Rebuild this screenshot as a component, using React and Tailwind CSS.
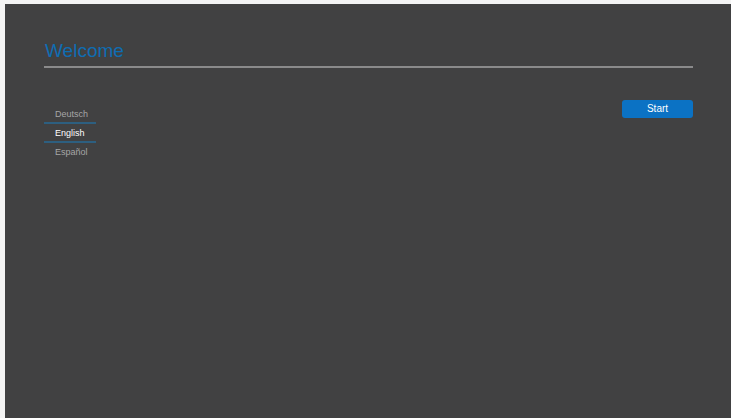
import React from 'react';

const languages = [
    { name: 'Deutsch', active: false },
    { name: 'English', active: true },
    { name: 'Español', active: false },
];

export const App = () => {
    return (
        <div className="h-[418px] w-[731px] bg-[#f4f4f4] pl-[5px] pt-[4px]" style={{ fontFamily: '"Liberation Sans", Arial, sans-serif' }}>
            <div className="h-full w-full bg-[#414142] pl-[39px] pr-[38px] pt-[35px]">
                <h1 className="text-[19px] leading-[24px] text-[#0f6db3] pl-px">Welcome</h1>
                <div className="mt-[3px] h-[2px] bg-[#8a8a8b]" />

                <div className="mt-[32px] flex items-start justify-between">
                    <ul className="w-[52px] pt-[5px]">
                        {languages.map((lang, i) => (
                            <li key={lang.name}>
                                {i > 0 && <div className="h-[2px] bg-[#2d5f80]" />}
                                <div className={`h-[17px] pl-[11px] text-[9px] leading-[18px] ${lang.active ? 'text-white' : 'text-[#a6a6a6]'}`}>
                                    {lang.name}
                                </div>
                            </li>
                        ))}
                    </ul>

                    <button className="h-[18px] w-[71px] rounded-[3px] bg-[#0b72c4] text-[10px] leading-[18px] text-white">
                        Start
                    </button>
                </div>
            </div>
        </div>
    );
};

export default App;
